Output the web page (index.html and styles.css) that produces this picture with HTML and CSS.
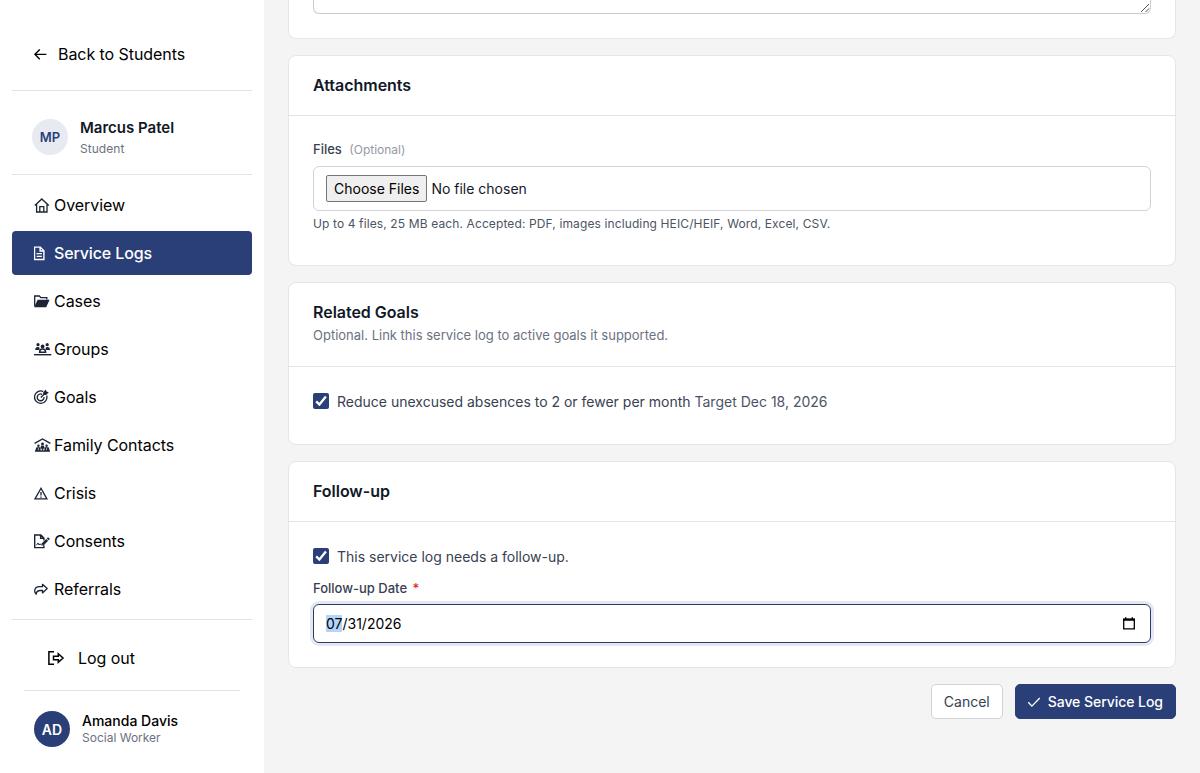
FILE: index.html
```html
<!DOCTYPE html>
<html lang="en">
<head>
<meta charset="utf-8">
<title>Service Log</title>
<link rel="stylesheet" href="styles.css">
</head>
<body>
<div class="app">
  <aside class="sidebar">
    <a class="back">
      <svg width="14" height="12" viewBox="0 0 14 12" fill="none" stroke="currentColor" stroke-width="1.35"><path d="M13.4 6.300H2M6.800 1.400 1.900 6.300 6.800 11.200"/></svg>
      <span>Back to Students</span>
    </a>
    <div class="profile">
      <span class="avatar avatar-light">MP</span>
      <div class="person">
        <span class="person-name">Marcus Patel</span>
        <span class="person-role">Student</span>
      </div>
    </div>
    <nav class="nav">
      <a class="nav-item"><svg class="icon" viewBox="0 0 18 16" fill="none" stroke="currentColor" stroke-width="1.3"><path d="M.8 8.5 7.8 2l7 6.5M2.6 7v8h10.400V7M5.800 14.800V9.600h4v5.200"/></svg><span>Overview</span></a>
      <a class="nav-item active"><svg class="icon" viewBox="0 0 18 16" fill="none" stroke="currentColor" stroke-width="1.4"><path d="M.5 2.100h5.800l3.600 3.600v8.800H.5zM6.100 2.200V6h3.700M2.600 8.600h5.200M2.600 11.400h5.200"/></svg><span>Service Logs</span></a>
      <a class="nav-item"><svg class="icon" viewBox="0 0 18 16"><path d="M.7 13.300V3h4.700l1.400 1.600h6v2" fill="none" stroke="currentColor" stroke-width="1.3"/><path d="M3.600 6.800h12L12.200 14.300H.2z" fill="currentColor"/></svg><span>Cases</span></a>
      <a class="nav-item"><svg class="icon" viewBox="0 0 18 16" fill="currentColor"><circle cx="4" cy="3.700" r="1.600"/><circle cx="13.200" cy="3.700" r="1.600"/><circle cx="8.600" cy="5.500" r="1.900"/><path d="M1.200 9.100c0-2 1-3 2.500-3 .9 0 1.500.2 1.900.7L5.400 9.100zM16 9.100c0-2-1-3-2.500-3-.9 0-1.500.2-1.900.7l.2 2.300z"/><path d="M5.600 11.200c0-2.200 1.200-3.200 3-3.200s3 1 3 3.200z" fill="none" stroke="currentColor" stroke-width="1.500"/><path d="M0 13h17.300v1.400H0z"/></svg><span>Groups</span></a>
      <a class="nav-item"><svg class="icon" viewBox="0 0 18 16" fill="none" stroke="currentColor" stroke-width="1.3"><path d="M9.300 2.500A6.200 6.200 0 1 0 12.700 6.500M8.100 5.300A3.400 3.400 0 1 0 10 8M6.800 8.500 10.600 4.800"/><path d="M9.900 5.200V3.400l1.700-1.700.5 1.400 1.500.5-1.700 1.700z" fill="currentColor"/></svg><span>Goals</span></a>
      <a class="nav-item"><svg class="icon" viewBox="0 0 18 16" fill="currentColor"><path d="M.6 6.300 8.500 2l7.900 4.300" fill="none" stroke="currentColor" stroke-width="1.400"/><circle cx="8.500" cy="6.900" r="1.400"/><circle cx="4.400" cy="8.700" r="1.200"/><circle cx="12.600" cy="8.700" r="1.200"/><path d="M6 11.500 7.300 8.600h2.400l1.300 2.900zM.8 14.700l1.600-4.400h3.500l1.300 4.400zM9.800 14.700l1.300-4.400h3.500l1.600 4.400z"/><circle cx="8.500" cy="11.800" r="1.100"/><path d="M6.500 14.700 7.700 12.900h1.600l1.200 1.800z"/><path d="M4.400 11.200v2M12.600 11.200v2" stroke="#fff" stroke-width=".7"/></svg><span>Family Contacts</span></a>
      <a class="nav-item"><svg class="icon" viewBox="0 0 18 16" fill="none" stroke="currentColor" stroke-width="1.3"><path d="M7 3.300 12.900 13.900H1zM7 6.900v3.600M7 11.500v1.200"/></svg><span>Crisis</span></a>
      <a class="nav-item"><svg class="icon" viewBox="0 0 18 16" fill="none" stroke="currentColor" stroke-width="1.400"><path d="M9.900 12.300v2.300H.7V2h6.200l3 3v2.500M6.600 2.200v3.100h3.200"/><path d="m2.500 12.200 1.500-2.200 1.100 2 1-1.200 1.100 1.200h1.300" stroke-width="1"/><path d="M8.300 11.700 13.200 6.900" stroke-width="2.700"/><path d="m13.700 6.400 1.300-1.300" stroke-width="2.700"/></svg><span>Consents</span></a>
      <a class="nav-item"><svg class="icon" viewBox="0 0 18 16" fill="none" stroke="currentColor" stroke-width="1.300" stroke-linejoin="round"><path d="M8.500 3.300 13.200 7.600 8.500 11.900V9.500H6.400C4 9.500 2.400 10.600 2.200 13.100 1.200 12.400.7 11.300.7 10 .8 7.300 2.700 5.700 5.600 5.700h2.900z"/></svg><span>Referrals</span></a>
    </nav>
    <div class="foot">
      <a class="logout"><svg width="17" height="14" viewBox="0 0 17 14" fill="none" stroke="currentColor" stroke-width="1.500"><path d="M6 .8H.9v12.400H6"/><path d="M10.300 2.800 15 7l-4.700 4.200V8.700H5.500V5.300h4.800z"/></svg><span>Log out</span></a>
      <div class="account">
        <span class="avatar avatar-dark">AD</span>
        <div class="person">
          <span class="account-name">Amanda Davis</span>
          <span class="account-role">Social Worker</span>
        </div>
      </div>
    </div>
  </aside>
  <main class="main">
    <section class="card card-notes">
      <div class="notes"><svg width="10" height="10" viewBox="0 0 10 10" stroke="#555" stroke-width="1"><path d="M1 9 9 1M5.500 9 9 5.500"/></svg></div>
    </section>
    <section class="card card-files">
      <header class="card-head"><h2>Attachments</h2></header>
      <div class="card-body">
        <div class="label label-files">Files <span class="optional">(Optional)</span></div>
        <div class="file-field"><button class="choose" type="button">Choose Files</button><span>No file chosen</span></div>
        <p class="hint">Up to 4 files, 25 MB each. Accepted: PDF, images including HEIC/HEIF, Word, Excel, CSV.</p>
      </div>
    </section>
    <section class="card card-goals">
      <header class="card-head"><h2>Related Goals</h2><p class="sub">Optional. Link this service log to active goals it supported.</p></header>
      <div class="card-body">
        <div class="check-row"><span class="check"><svg width="16" height="16" viewBox="0 0 16 16" fill="none" stroke="#fff" stroke-width="2.300"><path d="m3.200 8.400 3.200 3.200 6.500-8"/></svg></span><span>Reduce unexcused absences to 2 or fewer per month <span class="target">Target Dec 18, 2026</span></span></div>
      </div>
    </section>
    <section class="card card-follow">
      <header class="card-head"><h2>Follow-up</h2></header>
      <div class="card-body">
        <div class="check-row"><span class="check"><svg width="16" height="16" viewBox="0 0 16 16" fill="none" stroke="#fff" stroke-width="2.300"><path d="m3.200 8.400 3.200 3.200 6.500-8"/></svg></span><span>This service log needs a follow-up.</span></div>
        <div class="label label-date">Follow-up Date <span class="required">*</span></div>
        <div class="date-field"><span class="date"><span class="selected">07</span>/31/2026</span><svg width="12" height="13" viewBox="0 0 12 13"><path d="M.7 2.400h10.600v9.400H.7z" fill="none" stroke="#000" stroke-width="1.300"/><path d="M0 1.400h12v2.400H0zM2 .3h1.400v2H2zM8.600 .3H10v2H8.600z"/></svg></div>
      </div>
    </section>
    <div class="actions">
      <button class="btn" type="button">Cancel</button>
      <button class="btn btn-primary" type="button"><svg width="13" height="12" viewBox="0 0 13 12" fill="none" stroke="currentColor" stroke-width="1.300"><path d="m.3 6.300 3.600 3.800L11.800 2"/></svg><span>Save Service Log</span></button>
    </div>
  </main>
</div>
</body>
</html>
```
FILE: styles.css
```css
* { box-sizing: border-box; }
body { margin: 0; font-family: Inter, "Liberation Sans", sans-serif; color: #111827; }
h2, p { margin: 0; }
button { font-family: inherit; }
svg { display: block; flex: none; }
.app { display: flex; height: 773px; overflow: hidden; background: #f4f4f4; }

.sidebar { width: 264px; flex: none; padding: 0 12px; background: #fff; }
.back { display: flex; align-items: center; gap: 11px; height: 91px; padding: 18px 0 0 21px; border-bottom: 1px solid #e2e3e5; font-size: 16px; letter-spacing: -.06px; color: #000; }
.profile { display: flex; align-items: center; gap: 12px; height: 84px; padding: 8px 20px 0; border-bottom: 1px solid #e2e3e5; }
.avatar { display: flex; align-items: center; justify-content: center; width: 36px; height: 36px; flex: none; border-radius: 50%; font-weight: 600; }
.avatar-light { background: #e7eaf1; color: #2a3f77; font-size: 13px; }
.avatar-dark { background: #2a3f77; color: #fff; font-size: 14px; }
.person { display: flex; flex-direction: column; }
.profile .person { padding-top: 2px; }
.person-name { font-size: 15px; font-weight: 600; line-height: 22px; }
.person-role { font-size: 12px; line-height: 20px; letter-spacing: .05px; color: #6b7280; }
.nav { display: flex; flex-direction: column; gap: 4px; padding: 8px 0; border-bottom: 1px solid #e2e3e5; }
.nav-item { display: flex; align-items: center; gap: 2px; height: 44px; padding-left: 22px; border-radius: 4px; font-size: 16px; letter-spacing: -.06px; color: #000; }
.icon { width: 18px; height: 16px; color: #1b2334; }
.active { background: #2a3f77; color: #fff; font-weight: 500; letter-spacing: -.13px; }
.active .icon { color: #fff; }
.foot { padding: 0 12px; }
.logout { display: flex; align-items: center; gap: 13px; height: 71px; padding: 6px 0 0 24px; border-bottom: 1px solid #e2e3e5; font-size: 16px; letter-spacing: -.06px; color: #000; }
.account { display: flex; align-items: center; gap: 12px; height: 76px; padding-left: 10px; }
.account-name { font-size: 14px; font-weight: 500; line-height: 17px; color: #000; }
.account-role { font-size: 12px; line-height: 17px; color: #6b7280; }

.main { display: flex; flex-direction: column; gap: 16px; flex: 1; padding: 0 24px; }
.card { border: 1px solid #e5e6e8; border-radius: 8px; background: #fff; flex: none; }
.card-notes { height: 39px; padding: 0 24px; border-top: 0; border-radius: 0 0 8px 8px; }
.notes { display: flex; align-items: flex-end; justify-content: flex-end; height: 14px; border: 1px solid #c9ccd1; border-top: 0; border-radius: 0 0 6px 6px; }
.card-files { height: 211px; }
.card-goals { height: 163px; }
.card-follow { height: 207px; }
.card-head { padding: 18px 24px; border-bottom: 1px solid #e2e3e5; }
.card-head h2 { font-size: 16px; font-weight: 600; line-height: 23px; letter-spacing: -.03px; }
.sub { font-size: 13px; line-height: 19px; padding: 2px 0 3px; color: #6b7280; }
.card-body { padding: 24px 24px 0; }
.card-files .card-body { padding-top: 23px; }
.label { font-size: 13px; font-weight: 500; line-height: 20px; color: #374151; }
.label-files { margin-bottom: 6px; }
.optional { margin-left: 4px; font-size: 12px; font-weight: 400; color: #9299a5; }
.file-field { display: flex; align-items: center; gap: 4px; height: 45px; padding: 0 12px; border: 1px solid #d1d3d7; border-radius: 6px; font-size: 14px; }
.choose { height: 27px; padding: 0 7px; border: 1px solid #767676; border-radius: 2px; background: #efefef; font-size: 14px; color: #000; }
.hint { font-size: 12px; line-height: 18px; letter-spacing: .12px; margin-top: 4px; color: #4b5563; }
.check-row { display: flex; align-items: center; gap: 8px; height: 20px; font-size: 14px; color: #374151; }
.check { width: 16px; height: 16px; margin-bottom: 1px; border-radius: 2px; background: #2a3f77; }
.target { color: #4b5563; }
.label-date { margin: 12px 0 6px; }
.required { margin-left: 2px; color: #dc2626; }
.date-field { display: flex; align-items: center; justify-content: space-between; height: 39px; padding: 0 15px 0 12px; border: 1px solid #2b3a6b; border-radius: 6px; box-shadow: 0 0 0 3px #e5e8f3; font-size: 14px; color: #000; }
.selected { background: #b3d4fb; }
.actions { display: flex; justify-content: flex-end; gap: 12px; }
.btn { display: flex; align-items: center; gap: 7px; height: 35px; padding: 0 12px; border: 1px solid #d1d3d7; border-radius: 5px; background: #fff; font-size: 14px; color: #374151; }
.btn-primary { border-color: #2a3f77; background: #2a3f77; color: #fff; font-weight: 500; letter-spacing: -.05px; }
```
